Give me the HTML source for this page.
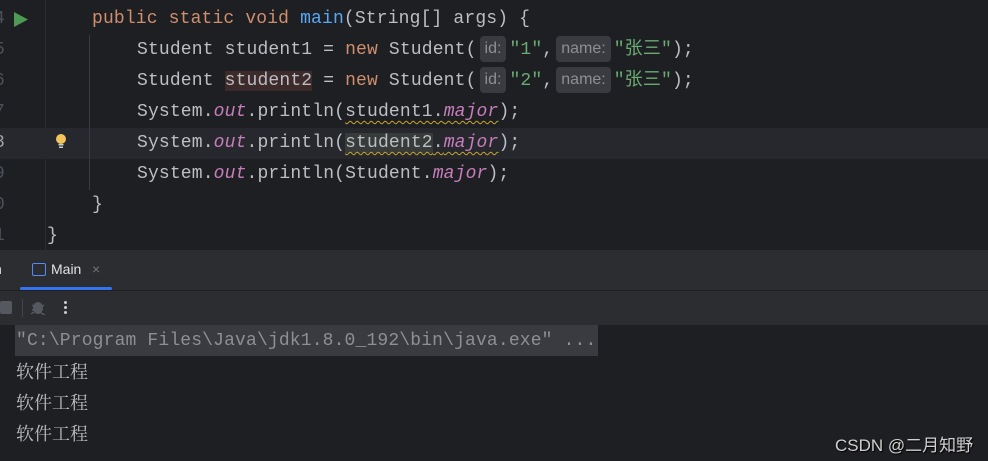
<!DOCTYPE html>
<html><head><meta charset="utf-8"><style>
html,body{margin:0;padding:0;width:988px;height:461px;overflow:hidden;background:#1e1f22;}
.ed{position:absolute;left:0;top:0;width:988px;height:250px;background:#1e1f22;}
.ln{position:absolute;left:0;width:988px;height:31px;font:18px "Liberation Mono","Noto Sans CJK SC",monospace;letter-spacing:0.15px;color:#bcbec4;line-height:31px;white-space:pre;}
.num{position:absolute;left:-6px;color:#4b5059;}
.code{position:absolute;}
.k{color:#cf8e6d}.f{color:#56a8f5}.s{color:#6aab73}.i{color:#c77dbb;font-style:italic}
.hint{display:inline-block;background:#393b40;color:#8c8f94;font:16px "Liberation Sans",sans-serif;border-radius:4px;padding:0 5px;line-height:26px;letter-spacing:0;margin:0 3px;vertical-align:1px}
.wav{text-decoration:underline wavy #c8a52a;text-decoration-thickness:1px;text-underline-offset:4px}
</style></head><body>
<div class="ed">
<div style="position:absolute;left:45px;top:0;width:1px;height:250px;background:#2b2d30"></div>
<div style="position:absolute;left:0;top:128px;width:988px;height:31px;background:#26282e"></div>
<div style="position:absolute;left:89px;top:35px;width:1px;height:155px;background:#393b40"></div>
<div class="ln" style="top:4px"><span class="num">4</span><svg style="position:absolute;left:14px;top:8px" width="14" height="15"><path d="M0 0L14 7.5L0 15Z" fill="#4e9a55"/></svg><span class="code" style="left:92px"><span class="k">public static void </span><span class="f">main</span>(String[] args) {</span></div>
<div class="ln" style="top:35px"><span class="num">5</span><span class="code" style="left:137px">Student student1 = <span class="k">new</span> Student(<span class="hint">id:</span><span class="s">"1"</span>,<span class="hint">name:</span><span class="s">"张三"</span>);</span></div>
<div class="ln" style="top:66px"><span class="num">6</span><span class="code" style="left:137px">Student <span style="background:#3d2a2b">student2</span> = <span class="k">new</span> Student(<span class="hint">id:</span><span class="s">"2"</span>,<span class="hint">name:</span><span class="s">"张三"</span>);</span></div>
<div class="ln" style="top:97px"><span class="num">7</span><span class="code" style="left:137px">System.<span class="i">out</span>.println(<span class="wav">student1.<span class="i">major</span></span>);</span></div>
<div class="ln" style="top:128px"><span class="num" style="color:#a1a3ab">8</span><svg style="position:absolute;left:55px;top:5px" width="12" height="16"><circle cx="6" cy="6" r="5" fill="#f2c55c"/><rect x="3.5" y="11" width="5" height="1.5" fill="#ccc"/><rect x="4" y="13.5" width="4" height="1.5" fill="#ccc"/></svg><span class="code" style="left:137px">System.<span class="i">out</span>.println(<span class="wav"><span style="background:#373b39">student2</span>.<span class="i">major</span></span>);</span></div>
<div class="ln" style="top:159px"><span class="num">9</span><span class="code" style="left:137px">System.<span class="i">out</span>.println(Student.<span class="i">major</span>);</span></div>
<div class="ln" style="top:190px"><span class="num">0</span><span class="code" style="left:92px">}</span></div>
<div class="ln" style="top:221px"><span class="num">1</span><span class="code" style="left:47px">}</span></div>
</div>
<div style="position:absolute;left:0;top:250px;width:988px;height:40px;background:#2b2d30"></div>
<div style="position:absolute;left:0;top:290px;width:988px;height:1px;background:#1e1f22"></div>
<div style="position:absolute;left:0;top:291px;width:988px;height:34px;background:#2b2d30"></div>
<div style="position:absolute;left:-6px;top:261px;color:#dfe1e5;font:14px 'Liberation Sans',sans-serif">n</div>
<div style="position:absolute;left:32px;top:263px;width:12px;height:11px;border:1.5px solid #548af7;border-radius:2px"></div>
<div style="position:absolute;left:51px;top:261px;color:#dfe1e5;font:14px 'Liberation Sans',sans-serif">Main</div>
<div style="position:absolute;left:92px;top:261px;color:#6f737a;font:14px 'Liberation Sans',sans-serif">×</div>
<div style="position:absolute;left:20px;top:287px;width:92px;height:3px;background:#3574f0;border-radius:2px"></div>
<div style="position:absolute;left:0;top:301px;width:12px;height:13px;background:#55585e;border-radius:2px"></div>
<div style="position:absolute;left:22px;top:299px;width:1px;height:18px;background:#43454a"></div>
<svg style="position:absolute;left:31px;top:299px" width="16" height="16"><ellipse cx="7" cy="9" rx="5" ry="6" fill="#55585e"/><path d="M1 6L4 8M13 6L10 8M1 11H4M0 15L3 13M10 14L14 16" stroke="#55585e" stroke-width="1.5"/></svg>
<div style="position:absolute;left:64px;top:301px;width:3px;height:3px;background:#ccc;border-radius:2px;box-shadow:0 5px 0 #ccc,0 10px 0 #ccc"></div>
<div style="position:absolute;left:15px;top:325px;width:583px;height:31px;background:#393b40"></div>
<div style="position:absolute;left:16px;top:326px;font:18px 'Liberation Mono',monospace;letter-spacing:0.15px;color:#8c8f94;line-height:31px;white-space:pre">"C:\Program Files\Java\jdk1.8.0_192\bin\java.exe" ...</div>
<div style="position:absolute;left:16px;top:357px;font:18px 'Liberation Serif','Noto Serif CJK SC',serif;color:#bcbec4;line-height:31px">软件工程</div>
<div style="position:absolute;left:16px;top:388px;font:18px 'Liberation Serif','Noto Serif CJK SC',serif;color:#bcbec4;line-height:31px">软件工程</div>
<div style="position:absolute;left:16px;top:419px;font:18px 'Liberation Serif','Noto Serif CJK SC',serif;color:#bcbec4;line-height:31px">软件工程</div>
<div style="position:absolute;left:835px;top:431px;font:17px 'Liberation Sans','Noto Sans CJK SC',sans-serif;color:#d0d0d0;text-shadow:1px 1px 1px #000">CSDN @二月知野</div>
</body></html>
